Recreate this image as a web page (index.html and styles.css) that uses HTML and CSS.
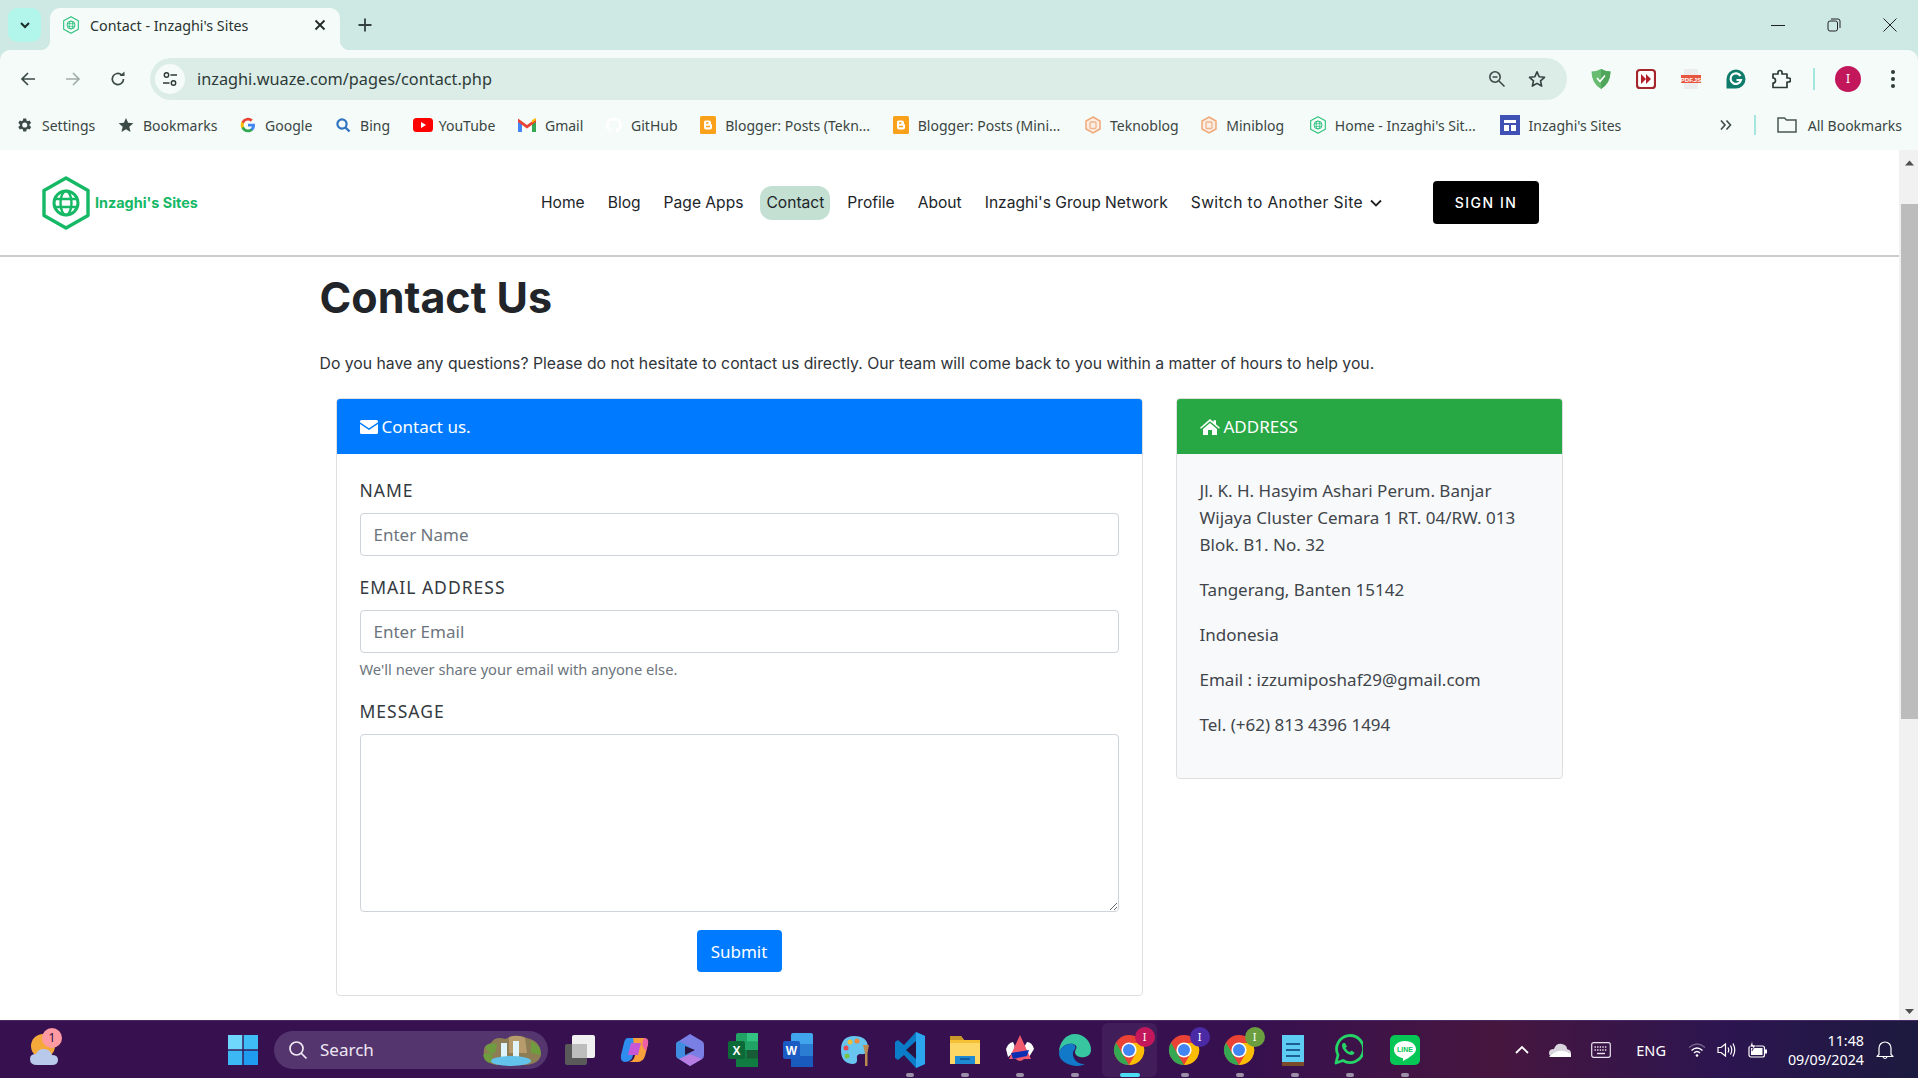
FILE: index.html
```html
<!DOCTYPE html>
<html lang="en">
<head>
    <meta charset="UTF-8">
    <title>Contact - Inzaghi's Sites</title>
    <link rel="stylesheet" href="styles.css">
</head>
<body>
    <!-- hex logo used in tab, bookmarks and page nav -->
    <svg class="defs" width="0" height="0">
        <symbol id="hexlogo" viewBox="0 0 48 54">
            <path d="M24 2 L46 14.5 V39.5 L24 52 L2 39.5 V14.5 Z" fill="none" stroke="currentColor" stroke-width="3.4" stroke-linejoin="round"/>
            <circle cx="24" cy="27" r="12" fill="none" stroke="currentColor" stroke-width="3"/>
            <ellipse cx="24" cy="27" rx="5.5" ry="12" fill="none" stroke="currentColor" stroke-width="2.4"/>
            <path d="M12.5 23 H35.5 M12.5 31 H35.5" stroke="currentColor" stroke-width="2.4"/>
        </symbol>
        <symbol id="blogger" viewBox="0 0 16 18">
            <rect width="16" height="18" rx="1.5" fill="#f9a11b"/>
            <path d="M5.5 4.5 H9 Q11 4.5 11 6.5 V8 Q12 8 12 9 V11.5 Q12 13.5 10 13.5 H6 Q4 13.5 4 11.5 V6 Q4 4.5 5.5 4.5 Z" fill="#fff"/>
            <path d="M6 7 H8.5 M6 10.5 H10" stroke="#f9a11b" stroke-width="1.4"/>
        </symbol>
        <symbol id="hexorange" viewBox="0 0 16 18">
            <path d="M8 1 L15 5 V13 L8 17 L1 13 V5 Z" fill="#fdeee3" stroke="#f0a878" stroke-width="1.5"/>
            <rect x="5" y="6" width="6" height="6.5" rx="1" fill="none" stroke="#eeb48c" stroke-width="1.3"/>
        </symbol>
        <symbol id="chrome" viewBox="0 0 32 32">
            <circle cx="16" cy="16" r="15" fill="#ea4335"/>
            <path d="M3 8.5 L9.5 20 L16 31 A15 15 0 0 1 3 8.5 Z" fill="#34a853"/>
            <path d="M16 31 L23 19 L16 9 H29.6 A15 15 0 0 1 16 31 Z" fill="#fbbc04"/>
            <circle cx="16" cy="16" r="7.6" fill="#fff"/>
            <circle cx="16" cy="16" r="6" fill="#4285f4"/>
        </symbol>
    </svg>

    <!-- tab strip -->
    <div class="tabstrip">
        <div class="tabsearch">
            <svg width="12" height="12" viewBox="0 0 12 12"><path d="M2 4 L6 8 L10 4" fill="none" stroke="#1d2b29" stroke-width="2"/></svg>
        </div>
        <div class="tab">
            <svg class="tab-fav" width="16" height="18"><use href="#hexlogo"/></svg>
            <span class="tab-title">Contact - Inzaghi's Sites</span>
            <svg width="12" height="12" viewBox="0 0 12 12"><path d="M1.5 1.5 L10.5 10.5 M10.5 1.5 L1.5 10.5" stroke="#1f2a28" stroke-width="1.8"/></svg>
        </div>
        <svg class="newtab" width="14" height="14" viewBox="0 0 14 14"><path d="M7 0.5 V13.5 M0.5 7 H13.5" stroke="#34423f" stroke-width="1.8"/></svg>
        <div class="winctl">
            <svg width="14" height="14" viewBox="0 0 14 14"><path d="M0 7.5 H14" stroke="#222" stroke-width="1"/></svg>
            <svg width="14" height="14" viewBox="0 0 14 14"><rect x="1" y="3" width="9.5" height="10" rx="2" fill="none" stroke="#222"/><path d="M4 1 H11 Q13 1 13 3 V10" fill="none" stroke="#222"/></svg>
            <svg width="14" height="14" viewBox="0 0 14 14"><path d="M0.5 0.5 L13.5 13.5 M13.5 0.5 L0.5 13.5" stroke="#222" stroke-width="1"/></svg>
        </div>
    </div>

    <!-- address bar -->
    <div class="toolbar">
        <div class="navbtns">
            <svg width="16" height="16" viewBox="0 0 16 16"><path d="M15 8 H2 M8 2 L2 8 L8 14" fill="none" stroke="#3c4a47" stroke-width="1.7"/></svg>
            <svg width="16" height="16" viewBox="0 0 16 16"><path d="M1 8 H14 M8 2 L14 8 L8 14" fill="none" stroke="#a3adaa" stroke-width="1.7"/></svg>
            <svg width="16" height="16" viewBox="0 0 16 16"><path d="M13.5 8 A5.6 5.6 0 1 1 11.6 3.8" fill="none" stroke="#3c4a47" stroke-width="1.7"/><path d="M9.5 5 H14.5 V0.5 Z" fill="#3c4a47"/></svg>
        </div>
        <div class="omnibox">
            <span class="sitechip">
                <svg width="16" height="16" viewBox="0 0 16 16"><circle cx="4.5" cy="4" r="2.2" fill="none" stroke="#2d3a37" stroke-width="1.4"/><path d="M8.5 4 H15 M1 12 H7.5" stroke="#2d3a37" stroke-width="1.4"/><circle cx="11.5" cy="12" r="2.2" fill="none" stroke="#2d3a37" stroke-width="1.4"/></svg>
            </span>
            <span class="url">inzaghi.wuaze.com/pages/contact.php</span>
            <svg width="18" height="18" viewBox="0 0 18 18"><circle cx="7" cy="7" r="5.2" fill="none" stroke="#3c4a47" stroke-width="1.6"/><path d="M4.5 7 H9.5 M11 11 L16.5 16.5" stroke="#3c4a47" stroke-width="1.6"/></svg>
            <svg class="omni-star" width="18" height="18" viewBox="0 0 24 24"><path d="M12 2.5 L14.9 9 L22 9.7 L16.7 14.4 L18.2 21.4 L12 17.8 L5.8 21.4 L7.3 14.4 L2 9.7 L9.1 9 Z" fill="none" stroke="#34423f" stroke-width="2.2" stroke-linejoin="round"/></svg>
        </div>
        <div class="exts">
            <svg width="20" height="22" viewBox="0 0 20 22"><path d="M10 1 Q15 3.5 19.5 3.5 Q19.5 15 10 21 Q0.5 15 0.5 3.5 Q5 3.5 10 1 Z" fill="#68bc71"/><path d="M10 1 Q15 3.5 19.5 3.5 Q19.5 15 10 21 Z" fill="#4fa65b"/><path d="M6 10 L9 13.5 L14 7.5" fill="none" stroke="#fff" stroke-width="1.6"/></svg>
            <svg width="20" height="22" viewBox="0 0 20 22"><rect x="1" y="2" width="18" height="18" rx="3" fill="#fff" stroke="#a4262c" stroke-width="2.2"/><path d="M5 6 L10 11 L5 16 Z M10 6 L15 11 L10 16 Z" fill="#b3202a"/></svg>
            <svg width="20" height="22" viewBox="0 0 20 22"><rect x="3" y="1" width="14" height="20" fill="#ececec"/><rect x="0" y="7" width="20" height="8" fill="#e8553f"/><text class="pdfjs" x="10" y="13.5">PDF.JS</text></svg>
            <svg width="20" height="20" viewBox="0 0 20 20"><path d="M10 0.5 A9.5 9.5 0 1 1 10 19.5 H0.5 V10 A9.5 9.5 0 0 1 10 0.5 Z" fill="#0f7b6a"/><path d="M14.5 7 A5.3 5.3 0 1 0 15 11 H10.5" fill="none" stroke="#fff" stroke-width="2.2"/></svg>
            <svg width="20" height="20" viewBox="0 0 20 20"><path d="M2 5 H7 V3.5 A2 2 0 0 1 11 3.5 V5 H16 V9 H17.5 A2 2 0 0 1 17.5 13 H16 V18.5 H2 V14 A1 1 0 0 0 2 9 Z" fill="none" stroke="#2d3a37" stroke-width="1.7" stroke-linejoin="round"/></svg>
            <span class="ext-sep"></span>
            <span class="avatar">I</span>
            <svg class="ext-menu" width="6" height="20" viewBox="0 0 6 20"><circle cx="3" cy="3" r="2" fill="#2d3a37"/><circle cx="3" cy="10" r="2" fill="#2d3a37"/><circle cx="3" cy="17" r="2" fill="#2d3a37"/></svg>
        </div>
    </div>

    <!-- bookmarks -->
    <div class="bookmarks">
        <a class="bm"><svg width="18" height="18" viewBox="0 0 24 24"><path d="M19.4 13a7.6 7.6 0 0 0 0-2l2.1-1.6-2-3.4-2.5 1a7.6 7.6 0 0 0-1.7-1L15 3.3h-4l-.4 2.7a7.6 7.6 0 0 0-1.7 1l-2.5-1-2 3.4L6.5 11a7.6 7.6 0 0 0 0 2l-2.1 1.6 2 3.4 2.5-1a7.6 7.6 0 0 0 1.7 1l.4 2.7h4l.4-2.7a7.6 7.6 0 0 0 1.7-1l2.5 1 2-3.4ZM13 15.4a3.4 3.4 0 1 1 0-6.8 3.4 3.4 0 0 1 0 6.8Z" fill="#3c4a47"/></svg>Settings</a>
        <a class="bm"><svg width="16" height="16" viewBox="0 0 24 24"><path d="M12 1.5 L15.2 8.8 L23 9.5 L17 14.7 L18.8 22.5 L12 18.4 L5.2 22.5 L7 14.7 L1 9.5 L8.8 8.8 Z" fill="#3c4a47"/></svg>Bookmarks</a>
        <a class="bm"><svg width="16" height="16" viewBox="0 0 24 24"><path d="M22.5 12.2c0-.8-.1-1.5-.2-2.2H12v4.2h5.9a5 5 0 0 1-2.2 3.3v2.7h3.5c2.1-1.9 3.3-4.7 3.3-8Z" fill="#4285f4"/><path d="M12 23c3 0 5.4-1 7.2-2.7l-3.500-2.700c-1 .6-2.200 1-3.700 1-2.800 0-5.200-1.900-6.100-4.500H2.300v2.800A11 11 0 0 0 12 23Z" fill="#34a853"/><path d="M5.900 14.100a6.600 6.600 0 0 1 0-4.200V7.100H2.300a11 11 0 0 0 0 9.800Z" fill="#fbbc05"/><path d="M12 5.400c1.600 0 3 .5 4.100 1.600l3.100-3.100A11 11 0 0 0 2.300 7.100l3.600 2.800C6.800 7.300 9.200 5.400 12 5.400Z" fill="#ea4335"/></svg>Google</a>
        <a class="bm"><svg width="16" height="16" viewBox="0 0 16 16"><circle cx="7" cy="7" r="4.6" fill="none" stroke="#2f74c0" stroke-width="2.2"/><path d="M10.5 10.5 L14.5 14.5" stroke="#2f74c0" stroke-width="2.4"/></svg>Bing</a>
        <a class="bm bm-yt"><svg width="20" height="16" viewBox="0 0 20 16"><rect y="1" width="20" height="14" rx="3.5" fill="#f00"/><path d="M8 5 L13 8 L8 11 Z" fill="#fff"/></svg>YouTube</a>
        <a class="bm"><svg width="18" height="16" viewBox="0 0 18 16"><path d="M0 3 V15 H4 V6 Z" fill="#4285f4"/><path d="M18 3 V15 H14 V6 Z" fill="#34a853"/><path d="M0 1.5 L9 8 L18 1.5 V5 L9 11.5 L0 5 Z" fill="#ea4335"/><path d="M14 6 L18 3 V1 L14 3 Z" fill="#fbbc04"/></svg>Gmail</a>
        <a class="bm"><svg width="16" height="16" viewBox="0 0 16 16"><path d="M8 .2a8 8 0 0 0-2.5 15.6c.4.1.5-.2.5-.4v-1.400c-2.200.5-2.700-1-2.700-1-.4-.9-.9-1.200-.9-1.200-.7-.5.1-.5.1-.5.8.1 1.200.8 1.200.8.7 1.200 1.900.9 2.300.7.1-.5.3-.9.5-1.100-1.800-.2-3.600-.9-3.600-4 0-.9.3-1.600.8-2.100-.1-.2-.4-1 .1-2.100 0 0 .7-.2 2.200.8a7.600 7.600 0 0 1 4 0c1.500-1 2.200-.8 2.200-.8.5 1.100.2 1.900.1 2.100.5.5.8 1.200.8 2.100 0 3.100-1.900 3.800-3.700 4 .3.2.6.7.6 1.500v2.200c0 .2.1.5.5.4A8 8 0 0 0 8 .2Z" fill="#fff"/></svg>GitHub</a>
        <a class="bm"><svg width="16" height="18"><use href="#blogger"/></svg>Blogger: Posts (Tekn...</a>
        <a class="bm"><svg width="16" height="18"><use href="#blogger"/></svg>Blogger: Posts (Mini...</a>
        <a class="bm bm-tb"><svg width="16" height="18"><use href="#hexorange"/></svg>Teknoblog</a>
        <a class="bm"><svg width="16" height="18"><use href="#hexorange"/></svg>Miniblog</a>
        <a class="bm bm-home"><svg class="tab-fav" width="16" height="18"><use href="#hexlogo"/></svg>Home - Inzaghi's Sit...</a>
        <a class="bm bm-iz"><svg width="20" height="20" viewBox="0 0 20 20"><rect width="20" height="20" fill="#3f51b5"/><path d="M4 5 H16 V8 H4 Z M4 10 H9 V16 H4 Z M11 10 H16 V16 H11 Z" fill="#fff"/></svg>Inzaghi's Sites</a>
        <svg class="bm-more" width="12" height="12" viewBox="0 0 12 12"><path d="M1 1.5 L5 6 L1 10.5 M6.5 1.5 L10.5 6 L6.5 10.5" fill="none" stroke="#3c4a47" stroke-width="1.6"/></svg>
        <span class="bm-sep"></span>
        <a class="bm bm-all"><svg width="20" height="18" viewBox="0 0 20 18"><path d="M1 2 H7.5 L9.5 4 H19 V16 H1 Z" fill="none" stroke="#4a5754" stroke-width="1.5"/></svg>All Bookmarks</a>
    </div>

    <!-- viewport: page + scrollbar -->
    <div class="viewport">
        <div class="page">
            <nav class="navbar">
                <a class="brand">
                    <svg class="brand-logo" width="48" height="54"><use href="#hexlogo"/></svg>
                    <span>Inzaghi's Sites</span>
                </a>
                <ul class="menu">
                    <li>Home</li>
                    <li>Blog</li>
                    <li>Page Apps</li>
                    <li class="active">Contact</li>
                    <li>Profile</li>
                    <li>About</li>
                    <li>Inzaghi's Group Network</li>
                    <li class="switch">Switch to Another Site
                        <svg width="12" height="8" viewBox="0 0 12 8"><path d="M1 1.5 L6 6.5 L11 1.5" fill="none" stroke="#222" stroke-width="1.8"/></svg>
                    </li>
                </ul>
                <button class="signin">SIGN IN</button>
            </nav>

            <div class="container">
                <h1>Contact Us</h1>
                <p class="lead">Do you have any questions? Please do not hesitate to contact us directly. Our team will come back to you within a matter of hours to help you.</p>

                <div class="row">
                    <div class="col-main">
                        <div class="card">
                            <div class="card-header header-blue">
                                <svg width="18" height="14" viewBox="0 0 18 14"><path d="M1.5 0 H16.5 A1.5 1.5 0 0 1 18 1.5 V2.2 L9 8.2 L0 2.2 V1.5 A1.5 1.5 0 0 1 1.5 0 Z M0 4 L9 10 L18 4 V12.5 A1.5 1.5 0 0 1 16.5 14 H1.5 A1.5 1.5 0 0 1 0 12.5 Z" fill="#fff"/></svg>
                                Contact us.
                            </div>
                            <form class="card-body">
                                <label>NAME</label>
                                <input class="field" type="text" placeholder="Enter Name">
                                <label>EMAIL ADDRESS</label>
                                <input class="field field-email" type="text" placeholder="Enter Email">
                                <small class="help">We'll never share your email with anyone else.</small>
                                <label>MESSAGE</label>
                                <textarea class="field field-msg"></textarea>
                                <div class="actions"><button type="button" class="submit">Submit</button></div>
                            </form>
                        </div>
                    </div>
                    <div class="col-side">
                        <div class="card card-address">
                            <div class="card-header header-green">
                                <svg width="20" height="16" viewBox="0 0 20 16"><path d="M10 0 L13.5 3 V1.2 H16 V5.2 L20 8.7 L19 9.8 L10 2.3 L1 9.8 L0 8.7 Z M3 10 L10 4 L17 10 V15.5 Q17 16 16.5 16 H12 V11 H8 V16 H3.5 Q3 16 3 15.5 Z" fill="#fff"/></svg>
                                ADDRESS
                            </div>
                            <div class="card-body address">
                                <p>Jl. K. H. Hasyim Ashari Perum. Banjar Wijaya Cluster Cemara 1 RT. 04/RW. 013 Blok. B1. No. 32</p>
                                <p>Tangerang, Banten 15142</p>
                                <p>Indonesia</p>
                                <p>Email : izzumiposhaf29@gmail.com</p>
                                <p>Tel. (+62) 813 4396 1494</p>
                            </div>
                        </div>
                    </div>
                </div>
            </div>
        </div>
        <div class="scrollbar">
            <svg class="scroll-up" width="19" height="26" viewBox="0 0 19 26"><path d="M6 15.5 L10.5 10.5 L15 15.5 Z" fill="#505050"/></svg>
            <div class="scroll-track"><div class="scroll-thumb"></div></div>
            <svg width="19" height="17" viewBox="0 0 19 17"><path d="M6 6 L10.5 11 L15 6 Z" fill="#505050"/></svg>
        </div>
    </div>

    <!-- windows taskbar -->
    <div class="taskbar">
        <div class="tb-weather">
            <svg width="32" height="38" viewBox="0 0 32 38"><circle cx="15" cy="15" r="12" fill="#f4a93a"/><path d="M9 34 Q2 34 2 28 Q2 23 8 23 Q10 18 16 18 Q22 18 24 24 Q30 24 30 29 Q30 34 24 34 Z" fill="#b9c9ec"/></svg>
            <span class="tb-badge">1</span>
        </div>
        <svg class="tb-win" width="30" height="30" viewBox="0 0 30 30"><rect width="14.3" height="14.3" fill="#6fd7fb"/><rect x="15.7" width="14.3" height="14.3" fill="#3fbdf6"/><rect y="15.7" width="14.3" height="14.3" fill="#3cb8f4"/><rect x="15.7" y="15.7" width="14.3" height="14.3" fill="#1f9cf0"/></svg>
        <div class="tb-search">
            <svg width="20" height="20" viewBox="0 0 20 20"><circle cx="8.5" cy="8.5" r="6.5" fill="none" stroke="#f0eaf5" stroke-width="1.7"/><path d="M13 13 L18.5 18.5" stroke="#f0eaf5" stroke-width="1.7"/></svg>
            <span>Search</span>
            <svg class="tb-falls" width="62" height="34" viewBox="0 0 62 34"><path d="M3 22 Q1 12 10 10 Q14 3 24 6 Q36 0 46 5 Q60 8 60 22 Q58 31 44 32 H16 Q5 31 3 22 Z" fill="#8d7d55"/><path d="M4 14 Q8 9 16 11 L14 20 Q8 22 4 14 Z M50 8 Q60 12 60 22 L50 20 Z M2 22 Q6 18 12 22 L10 30 Q4 30 2 22 Z" fill="#6f9c3f"/><path d="M28 4 Q36 1 44 5 L46 20 H28 Z" fill="#b79b6c"/><path d="M20 10 H26 V24 H20 Z M32 8 H38 V24 H32 Z" fill="#dff3fb"/><ellipse cx="30" cy="28" rx="20" ry="5" fill="#63c3ea"/></svg>
        </div>
        <div class="tb-apps">
            <span class="tb-app"><svg width="30" height="30" viewBox="0 0 30 30"><rect y="9" width="22" height="21" rx="2" fill="#5a5a5a"/><rect x="7" y="0" width="23" height="23" rx="2" fill="#f0f0f0"/><rect x="7" y="9" width="15" height="14" fill="#bdbdbd"/></svg></span>
            <span class="tb-app"><svg width="30" height="30" viewBox="0 0 30 30"><path d="M8 3 H17 L13 20 Q12 27 5 27 Q0 27 1 20 L4 8 Q5 3 8 3 Z" fill="#2f8df0"/><path d="M13 3 H24 Q29 3 28 9 L25 21 Q23 27 17 27 H9 Q14 26 15 20 Z" fill="#f8a13c"/><path d="M11 8 H21 L18 20 H8 Z" fill="#c658d8"/><path d="M24 3 Q29 3 28 9 L26 16 Q20 10 24 3 Z" fill="#ef5fa7"/></svg></span>
            <span class="tb-app"><svg width="28" height="32" viewBox="0 0 28 32"><path d="M14 0 L26 7 Q28 8 28 11 V21 Q28 24 26 25 L14 32 L3 25 Q0 24 0 20 V11 Q0 8 3 7 Z" fill="#7a7fe6"/><path d="M3 7 L14 13 V20 L3 25 Q0 24 0 20 V11 Q0 8 3 7 Z" fill="#3f8de0"/><path d="M14 20 L26 25 L14 32 L3 25 Z" fill="#b67de3"/><path d="M9 12 L19 16 L9 21 Z" fill="#2a1240"/></svg></span>
            <span class="tb-app tb-office"><svg width="30" height="34" viewBox="0 0 30 34"><rect x="8" width="22" height="34" rx="2" fill="#21a366"/><rect x="19" y="0" width="11" height="8.5" fill="#33c481"/><rect x="19" y="8.5" width="11" height="8.5" fill="#21a366"/><rect x="8" y="17" width="22" height="17" fill="#107c41"/><rect x="19" y="17" width="11" height="8.5" fill="#185c37"/><rect y="8" width="17" height="18" rx="2" fill="#0c6a38"/><text class="tb-letter" x="8.5" y="22">X</text></svg></span>
            <span class="tb-app tb-office"><svg width="30" height="34" viewBox="0 0 30 34"><rect x="8" width="22" height="34" rx="2" fill="#41a5ee"/><rect x="8" y="11" width="22" height="12" fill="#2b7cd3"/><rect x="8" y="23" width="22" height="11" fill="#185abd"/><rect y="8" width="17" height="18" rx="2" fill="#1a5cc4"/><text class="tb-letter" x="8.5" y="22">W</text></svg></span>
            <span class="tb-app"><svg width="30" height="34" viewBox="0 0 30 34"><path d="M14 3 Q28 3 28 15 Q28 22 21 21 Q16 21 17 26 Q18 31 12 31 Q1 30 1 17 Q1 3 14 3 Z" fill="#67c5ef"/><circle cx="10" cy="9" r="2.5" fill="#e8c23a"/><circle cx="17" cy="8" r="2.5" fill="#f08a3c"/><circle cx="6" cy="15" r="2.5" fill="#e5484d"/><circle cx="7" cy="23" r="2.5" fill="#7bc244"/><path d="M23 12 H29 L27.5 20 V33 H25 V20 Z" fill="#b98a4e"/></svg></span>
            <span class="tb-app tb-running"><svg width="30" height="36" viewBox="0 0 30 36"><path d="M21 0 L30 4 V32 L21 36 L9 23 L3 28 L0 26 V10 L3 8 L9 13 Z" fill="#0a7cc8"/><path d="M21 0 L30 4 V32 L21 36 Z" fill="#2ca6ee"/><path d="M21 9 L11 18 L21 27 Z" fill="#2a1240"/></svg></span>
            <span class="tb-app tb-running"><svg width="32" height="30" viewBox="0 0 32 30"><path d="M1 1 H12 L15 5 H31 V29 H1 Z" fill="#f5c033"/><path d="M1 1 H12 L15 5 H1 Z" fill="#c9962c"/><rect x="1" y="8" width="30" height="21" fill="#fcd765"/><path d="M6 21 H26 V29 H6 Z" fill="#1f8ad4"/><path d="M11 24 H21" stroke="#0d5e9e" stroke-width="2"/></svg></span>
            <span class="tb-app tb-running"><svg width="30" height="30" viewBox="0 0 30 30"><path d="M1 14 Q3 8 8 7 Q11 12 9 17 L3 22 Z M29 14 Q27 7 22 7 L18 14 L24 22 Z" fill="#fff"/><path d="M15 0 L4 24 H11 Q15 28 19 24 H26 Z" fill="#f05a6e"/><path d="M6 18 L24 15 L22 21 L8 24 Z" fill="#0b2fb3"/></svg></span>
            <span class="tb-app tb-running"><svg width="32" height="32" viewBox="0 0 32 32"><path d="M16 0 A16 16 0 0 1 32 16 C32 22 26 24 21 23 C16 22 15 18 17 15 C19 12 15 9 10 10 C4 11 1 15 0 19 C0 8 7 0 16 0 Z" fill="#37c6a0"/><path d="M0 19 C1 15 4 11 10 10 C14 9 18 12 16 15 C12 19 14 26 20 29 C24 31 27 30 29 28 C24 32 18 33 12 31 C5 29 0 25 0 19 Z" fill="#1278c8"/></svg></span>
            <span class="tb-app tb-chrome-active"><span class="tb-chrome"><svg width="32" height="32"><use href="#chrome"/></svg><span class="tb-avatar tb-av-pink">I</span></span></span>
            <span class="tb-app tb-running"><span class="tb-chrome"><svg width="32" height="32"><use href="#chrome"/></svg><span class="tb-avatar tb-av-purple">I</span></span></span>
            <span class="tb-app tb-running"><span class="tb-chrome"><svg width="32" height="32"><use href="#chrome"/></svg><span class="tb-avatar tb-av-green">I</span></span></span>
            <span class="tb-app tb-running"><svg class="tb-notes" width="22" height="34" viewBox="0 0 22 34"><rect y="2" width="22" height="29" fill="#5ecdf4"/><rect y="29" width="22" height="4" fill="#7a4a2a"/><path d="M4 11 H18 M4 17 H18 M4 23 H18" stroke="#1b5f93" stroke-width="2"/></svg></span>
            <span class="tb-app tb-running"><svg class="tb-wa" width="30" height="32" viewBox="0 0 30 32"><path d="M3 29 L5 21 A13.5 13.5 0 1 1 10 26.5 Z" fill="none" stroke="#25d366" stroke-width="2.8" stroke-linejoin="round"/><path d="M10 9 Q8 11 10 15 Q13 20 18 21 Q21 21 21.5 18.5 L18.5 16.5 L17 18 Q14 17 12.5 14 L14 12.5 L12 9 Z" fill="#25d366"/></svg></span>
            <span class="tb-app tb-running"><svg width="30" height="30" viewBox="0 0 30 30"><rect width="30" height="30" rx="5" fill="#06c755"/><path d="M15 6 C8 6 4 10 4 14.5 C4 19 8 22.5 13 23 L13 26 Q19 23 23 19.5 Q26 17 26 14.5 C26 10 22 6 15 6 Z" fill="#fff"/><text class="tb-line" x="15" y="17">LINE</text></svg></span>
        </div>
        <div class="tb-tray">
            <svg class="tray-chev" width="16" height="10" viewBox="0 0 16 10"><path d="M2 8 L8 2 L14 8" fill="none" stroke="#fff" stroke-width="1.8"/></svg>
            <svg class="tray-cloud" width="22" height="14" viewBox="0 0 22 14"><path d="M5 14 Q0 14 0 10 Q0 6 5 6 Q7 0 13 1 Q18 2 18 6 Q22 7 22 10 Q22 14 18 14 Z" fill="#d9d3dd"/><path d="M0 14 H22 V11 Q12 5 5 10 Z" fill="#fff"/></svg>
            <svg class="tray-kb" width="20" height="16" viewBox="0 0 20 16"><rect x="0.7" y="0.7" width="18.6" height="14.6" rx="2" fill="none" stroke="#e8e3ec" stroke-width="1.2"/><path d="M3.5 5 H16.5 M3.5 8 H16.5" stroke="#e8e3ec" stroke-width="1.4" stroke-dasharray="1.4 1.2"/><path d="M6 11.5 H14" stroke="#e8e3ec" stroke-width="1.4"/></svg>
            <span class="tray-eng">ENG</span>
            <svg class="tray-wifi" width="18" height="16" viewBox="0 0 18 16"><path d="M1 5.5 Q9 -1.5 17 5.5" fill="none" stroke="#77668a" stroke-width="1.4"/><path d="M3.5 8.5 Q9 3.5 14.5 8.5 M6 11 Q9 8 12 11" fill="none" stroke="#fff" stroke-width="1.4"/><circle cx="9" cy="13.5" r="1.3" fill="#fff"/></svg>
            <svg class="tray-vol" width="20" height="16" viewBox="0 0 20 16"><path d="M1 5.5 H4 L8.5 2 V14 L4 10.5 H1 Z" fill="none" stroke="#fff" stroke-width="1.2"/><path d="M11 5.5 Q12.5 8 11 10.5 M13.5 3.5 Q16 8 13.5 12.5 M16 1.5 Q19.5 8 16 14.5" fill="none" stroke="#fff" stroke-width="1.2"/></svg>
            <svg class="tray-bat" width="20" height="18" viewBox="0 0 20 18"><rect x="1" y="5" width="15.5" height="11" rx="2" fill="none" stroke="#fff" stroke-width="1.2"/><rect x="3" y="7" width="11.5" height="7" fill="#fff"/><path d="M4 0 L2 6 H5 L4 10 L8 4 H5 Z" fill="#fff" stroke="#2d1348" stroke-width="0.6"/><rect x="17" y="8.5" width="2" height="4" fill="#fff"/></svg>
            <div class="tray-clock"><div>11:48</div><div>09/09/2024</div></div>
            <svg class="tray-bell" width="18" height="20" viewBox="0 0 18 20"><path d="M3 14.5 V8 A6 6 0 0 1 15 8 V14.5 L17 16.5 H1 Z M7 17 Q9 20 11 17" fill="none" stroke="#fff" stroke-width="1.2" stroke-linejoin="round"/></svg>
        </div>
    </div>
</body>
</html>
```

FILE: styles.css
```css
* {
    box-sizing: border-box;
}
html, body {
    margin: 0;
    height: 100%;
    overflow: hidden;
}
body {
    display: flex;
    flex-direction: column;
    font-family: "Inter", sans-serif;
    color: #212529;
    background: #cee9e3;
}
svg {
    flex: none;
    display: block;
}
.defs {
    position: absolute;
}

/* tab strip */
.tabstrip {
    height: 50px;
    flex: none;
    background: #cee9e3;
    display: flex;
    align-items: center;
    padding-left: 8px;
}
.tabsearch {
    width: 33px;
    height: 34px;
    background: #b2f5ea;
    border-radius: 9px;
    display: flex;
    align-items: center;
    justify-content: center;
}
.tab {
    position: relative;
    width: 290px;
    height: 42px;
    margin: 8px 0 0 9px;
    padding: 0 14px 8px 13px;
    background: #f4fbf8;
    border-radius: 10px 10px 0 0;
    display: flex;
    align-items: center;
    gap: 11px;
}
/* flared feet of the active tab */
.tab::before, .tab::after {
    content: "";
    position: absolute;
    bottom: 0;
    width: 10px;
    height: 10px;
}
.tab::before {
    left: -10px;
    background: radial-gradient(circle at 0 0, transparent 10px, #f4fbf8 10.5px);
}
.tab::after {
    right: -10px;
    background: radial-gradient(circle at 100% 0, transparent 10px, #f4fbf8 10.5px);
}
.tab-fav {
    color: #2fc27e;
}
.tab-title {
    flex: 1;
    font: 14.3px "Noto Sans", sans-serif;
    color: #2a3331;
    white-space: nowrap;
}
.newtab {
    margin-left: 18px;
}
.winctl {
    margin-left: auto;
    display: flex;
    gap: 42px;
    padding-right: 21px;
}

/* toolbar */
.toolbar {
    height: 50px;
    flex: none;
    padding: 8px 0 0 20px;
    background: #f4fbf8;
    border-radius: 10px 10px 0 0;
    display: flex;
    align-items: center;
}
.navbtns {
    display: flex;
    gap: 29px;
    width: 130px;
}
.omnibox {
    width: 1417px;
    height: 42px;
    padding: 0 21px 0 5px;
    background: #dcede8;
    border-radius: 21px;
    display: flex;
    align-items: center;
}
.sitechip {
    width: 30px;
    height: 30px;
    border-radius: 50%;
    background: #f4fbf8;
    display: flex;
    align-items: center;
    justify-content: center;
}
.url {
    flex: 1;
    margin-left: 12px;
    font: 16.3px "Noto Sans", sans-serif;
    color: #2d3a37;
}
.omni-star {
    margin-left: 22px;
}
.exts {
    display: flex;
    align-items: center;
    margin-left: 24px;
    gap: 25px;
}
.pdfjs {
    font: bold 6px "Liberation Sans", sans-serif;
    fill: #fff;
    text-anchor: middle;
}
.ext-sep {
    width: 2px;
    height: 22px;
    margin: 0 -5px 0 -3px;
    background: #a5e6de;
}
.avatar {
    width: 26px;
    height: 26px;
    border-radius: 50%;
    background: #c2185b;
    color: #fff;
    font: 12px "Noto Sans", sans-serif;
    text-align: center;
    line-height: 26px;
}
.ext-menu {
    margin-left: 4px;
}

/* bookmarks bar */
.bookmarks {
    height: 50px;
    flex: none;
    background: #f4fbf8;
    display: flex;
    align-items: center;
    padding-left: 15px;
}
.bm {
    display: flex;
    align-items: center;
    gap: 9px;
    font: 14px "Noto Sans", sans-serif;
    color: #3a4543;
    white-space: nowrap;
    margin-right: 22.7px;
}
.bm-yt {
    gap: 6px;
}
.bm-tb {
    margin-left: 2px;
}
.bm-home {
    margin-left: 3px;
}
.bm-iz {
    margin-left: 1px;
}
.bm-more {
    margin-left: auto;
}
.bm-sep {
    width: 2px;
    height: 20px;
    background: #a5e6de;
    margin: 0 21px 0 22px;
}
.bm-all {
    gap: 11px;
    margin-right: 16px;
}

/* page area */
.viewport {
    flex: 1;
    min-height: 0;
    display: flex;
}
.page {
    flex: 1;
    min-width: 0;
    overflow: hidden;
    background: #fff;
}
.scrollbar {
    width: 19px;
    background: #f1f1f1;
    display: flex;
    flex-direction: column;
}
.scroll-track {
    flex: 1;
    padding: 28px 0 0 2px;
}
.scroll-thumb {
    height: 515px;
    background: #bcbcbc;
}

/* site nav */
.navbar {
    height: 107px;
    padding-left: 42px;
    border-bottom: 2px solid #ccc;
    display: flex;
    align-items: center;
}
.brand {
    display: flex;
    align-items: center;
    gap: 5px;
    width: 493px;
    font-weight: 700;
    font-size: 14.4px;
    color: #15b865;
}
.brand-logo {
    color: #15b865;
}
.menu {
    list-style: none;
    display: flex;
    align-items: center;
    margin: 0;
    padding: 0;
    font-size: 15.6px;
    color: #212529;
    gap: 11px;
}
.menu li {
    padding: 6px;
    border-radius: 12px;
    line-height: 22px;
    white-space: nowrap;
}
.menu .active {
    background: #c3e0d2;
}
.switch {
    display: flex;
    align-items: center;
    gap: 7px;
    letter-spacing: 0.4px;
}
.signin {
    width: 106px;
    height: 43px;
    margin-left: 45px;
    border: 0;
    border-radius: 4px;
    background: #000;
    color: #fff;
    font: 500 14px "Inter", sans-serif;
    letter-spacing: 1.5px;
}

/* content */
.container {
    width: 1290px;
    margin: 0 auto;
    padding: 0 15px;
}
h1 {
    margin: 14px 0 0;
    font-size: 43px;
    line-height: 53px;
    font-weight: 700;
}
.lead {
    margin: 28px 0 22px;
    font-size: 15.78px;
    line-height: 24px;
    color: #2f3438;
}
.row {
    display: grid;
    grid-template-columns: 840px 420px;
    align-items: start;
}
.col-main, .col-side {
    padding: 0 17px 0 16px;
}
.card {
    border: 1px solid #dfdfdf;
    border-radius: 4px;
    font-family: "Noto Sans", sans-serif;
    overflow: hidden;
}
.card-header {
    height: 55px;
    padding: 0 23px;
    display: flex;
    align-items: center;
    gap: 4px;
    color: #fff;
    font-size: 17px;
}
.header-blue {
    background: #007bff;
}
.header-green {
    background: #28a745;
}
.card-body {
    padding: 23px 23px 23px;
}
label {
    display: block;
    font-size: 17.5px;
    line-height: 27px;
    letter-spacing: 1px;
    color: #343a40;
    margin-bottom: 9px;
}
.field {
    display: block;
    width: 100%;
    height: 43px;
    padding: 6px 13px;
    border: 1px solid #ced4da;
    border-radius: 4px;
    font: 17px "Noto Sans", sans-serif;
    margin-bottom: 18px;
}
.field::placeholder {
    color: #6c757d;
}
.field-email {
    margin-bottom: 5px;
}
.field-msg {
    height: 178px;
    margin-bottom: 18px;
    resize: vertical;
}
.help {
    display: block;
    font-size: 14.7px;
    line-height: 22px;
    color: #6c757d;
    margin-bottom: 18px;
}
.actions {
    display: flex;
    justify-content: center;
}
.submit {
    width: 85px;
    height: 42px;
    border: 0;
    border-radius: 4px;
    background: #007bff;
    color: #fff;
    font: 17px "Noto Sans", sans-serif;
}
.card-address {
    background: #f8f9fa;
}
.address {
    padding-bottom: 22px;
}
.address p {
    margin: 0 0 18px;
    font-size: 17px;
    line-height: 27px;
    color: #3f454b;
}

/* taskbar */
.taskbar {
    height: 58px;
    flex: none;
    display: flex;
    align-items: center;
    padding-left: 28px;
    border-top: 1px solid #4a2a63;
    background: linear-gradient(90deg, #36104f 0%, #36104f 65%, #47163f 78%, #2c1550 90%, #1c1a3e 100%);
    color: #fff;
}
.tb-weather {
    position: relative;
    width: 32px;
    margin-right: 168px;
}
.tb-badge {
    position: absolute;
    top: -3px;
    left: 14px;
    width: 20px;
    height: 20px;
    border-radius: 50%;
    background: #ff9aa2;
    color: #2a1240;
    font: 12px "Noto Sans", sans-serif;
    text-align: center;
    line-height: 20px;
}
.tb-win {
    margin-right: 16px;
}
.tb-search {
    width: 274px;
    height: 38px;
    padding: 0 5px 0 14px;
    border-radius: 19px;
    background: #54356e;
    display: flex;
    align-items: center;
    gap: 12px;
    font: 17px "Noto Sans", sans-serif;
    color: #eee7f3;
}
.tb-falls {
    margin-left: auto;
}
.tb-apps {
    display: flex;
    align-items: center;
    margin-left: 4px;
}
.tb-app {
    position: relative;
    width: 55px;
    height: 54px;
    display: flex;
    align-items: center;
    justify-content: center;
}
.tb-office svg {
    margin-left: -4px;
}
.tb-notes {
    margin-left: -4px;
}
.tb-wa {
    margin-left: -4px;
}
.tb-running::after, .tb-chrome-active::after {
    content: "";
    position: absolute;
    bottom: 0;
    left: 50%;
    width: 8px;
    height: 4px;
    margin-left: -4px;
    border-radius: 2px;
    background: #9c8fa8;
}
.tb-chrome-active {
    background: rgba(255, 255, 255, 0.06);
    border-radius: 6px;
}
.tb-chrome-active::after {
    width: 20px;
    margin-left: -10px;
    background: #4cdcf4;
}
.tb-chrome {
    position: relative;
    display: block;
    margin-left: -2px;
}
.tb-avatar {
    position: absolute;
    top: -7px;
    right: -10px;
    width: 20px;
    height: 20px;
    border-radius: 50%;
    font: 11px "Noto Sans", sans-serif;
    text-align: center;
    line-height: 20px;
    color: #fff;
}
.tb-av-pink {
    background: #c2185b;
}
.tb-av-purple {
    background: #4a2aa5;
}
.tb-av-green {
    background: #6a9e3f;
}
.tb-letter {
    font: bold 12px "Liberation Sans", sans-serif;
    fill: #fff;
    text-anchor: middle;
}
.tb-line {
    font: bold 7px "Liberation Sans", sans-serif;
    fill: #06c755;
    text-anchor: middle;
}
.tb-tray {
    margin-left: auto;
    display: flex;
    align-items: center;
    padding-right: 24px;
    font: 14.3px "Noto Sans", sans-serif;
}
.tray-cloud {
    margin-left: 19px;
}
.tray-kb {
    margin-left: 20px;
}
.tray-eng {
    margin-left: 25px;
    font-size: 14.5px;
}
.tray-wifi {
    margin-left: 22px;
}
.tray-vol {
    margin-left: 11px;
}
.tray-bat {
    margin-left: 11px;
}
.tray-clock {
    margin-left: 20px;
    text-align: right;
    line-height: 19px;
}
.tray-bell {
    margin-left: 12px;
}
```
